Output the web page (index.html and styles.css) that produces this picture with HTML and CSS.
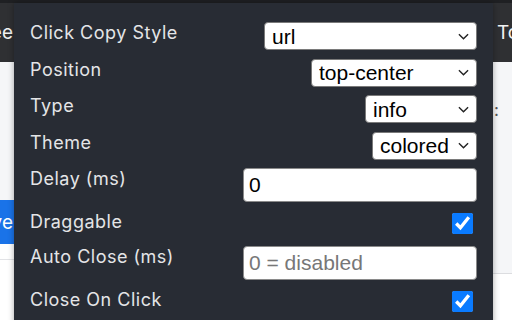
FILE: index.html
```html
<!DOCTYPE html>
<html lang="en">
<head>
    <meta charset="UTF-8">
    <meta name="viewport" content="width=device-width, initial-scale=1.0">
    <title>Toast Settings</title>
    <link rel="stylesheet" href="styles.css">
</head>
<body>
    <div class="page">
        <div class="topbar">
            <div class="cut-left">Free</div>
            <div></div>
            <div class="cut-right">Tools</div>
        </div>
        <div class="content">
            <div class="side side-left">
                <div class="save-btn">Save</div>
                <div class="side-foot"></div>
            </div>
            <div></div>
            <div class="side side-right">
                <div class="side-mark">:</div>
                <div class="side-foot"></div>
            </div>
        </div>
    </div>

    <div class="panel">
        <div class="row">
            <label>Click Copy Style</label>
            <select class="sel-style">
                <option>url</option>
            </select>
        </div>
        <div class="row">
            <label>Position</label>
            <select class="sel-position">
                <option>top-center</option>
            </select>
        </div>
        <div class="row">
            <label>Type</label>
            <select class="sel-type">
                <option>info</option>
            </select>
        </div>
        <div class="row">
            <label>Theme</label>
            <select class="sel-theme">
                <option>colored</option>
            </select>
        </div>
        <div class="row">
            <label>Delay (ms)</label>
            <input type="text" class="num" value="0">
        </div>
        <div class="row">
            <label>Draggable</label>
            <input type="checkbox" class="check" checked>
        </div>
        <div class="row">
            <label>Auto Close (ms)</label>
            <input type="text" class="num" placeholder="0 = disabled">
        </div>
        <div class="row">
            <label>Close On Click</label>
            <input type="checkbox" class="check" checked>
        </div>
    </div>
</body>
</html>
```

FILE: styles.css
```css
*{
    margin: 0;
    padding: 0;
    box-sizing: border-box;
}
body{
    width: 512px;
    height: 320px;
    overflow: hidden;
    font-family: Inter, "Liberation Sans", sans-serif;
    background-color: #fff;
}

/* page behind the popup */
.page{
    height: 320px;
    display: flex;
    flex-direction: column;
}
.topbar{
    height: 62px;
    border-top: 3px solid #1f2023;
    background-color: #2f3033;
    color: #f2f2f2;
    font-size: 19px;
    display: grid;
    grid-template-columns: 14px 1fr 19px;
    align-items: center;
}
.cut-left{
    display: flex;
    justify-content: flex-end;
    overflow: hidden;
    white-space: nowrap;
    padding-right: 1px;
}
.cut-right{
    overflow: hidden;
    white-space: nowrap;
    padding-left: 4px;
}
.content{
    flex: 1;
    display: grid;
    grid-template-columns: 14px 1fr 19px;
}
.side{
    display: flex;
    flex-direction: column;
    background-color: #f5f6f8;
}
.save-btn{
    margin-top: 138px;
    height: 44px;
    background-color: #1a73e8;
    color: #fff;
    font-size: 19px;
    display: flex;
    align-items: center;
    justify-content: flex-end;
    overflow: hidden;
    white-space: nowrap;
    padding-right: 1px;
}
.side-left .side-foot{
    flex: 1;
    background-color: #fff;
    border-top: 15px solid #fff;
    box-shadow: inset 0 1px 0 #e2e3e6;
}
.side-mark{
    height: 211px;
    padding-top: 38px;
    padding-left: 1px;
    color: #555;
    font-size: 17px;
}
.side-right .side-foot{
    flex: 1;
    background-color: #fff;
    border-top: 1px solid #dcdde0;
}

/* popup */
.panel{
    position: absolute;
    left: 14px;
    top: 3px;
    width: 479px;
    height: 330px;
    background-color: #282c34;
    box-shadow: 0 0 6px rgba(0,0,0,.35);
    padding: 19px 16px 0 16px;
    display: flex;
    flex-direction: column;
    gap: 8.5px;
}
.row{
    display: flex;
    justify-content: space-between;
    align-items: flex-start;
}
.row label{
    font-size: 18px;
    letter-spacing: 0.5px;
    color: #e4e5e7;
    line-height: normal;
}
select{
    -webkit-appearance: none;
    appearance: none;
    height: 28px;
    border: 1px solid #7a7a7a;
    border-radius: 4px;
    padding: 0 26px 0 7px;
    font-family: "Liberation Sans", Arial, sans-serif;
    font-size: 21px;
    color: #000;
    background-color: #fff;
    background-image: url("data:image/svg+xml,%3Csvg xmlns='http://www.w3.org/2000/svg' viewBox='0 0 12 7'%3E%3Cpath d='M1 1L6 6L11 1' fill='none' stroke='%23222' stroke-width='1.5'/%3E%3C/svg%3E");
    background-repeat: no-repeat;
    background-size: 11px 7px;
    background-position: right 7px center;
}
.sel-style{
    width: 213px;
}
.sel-position{
    width: 166px;
}
.sel-type{
    width: 112px;
}
.sel-theme{
    width: 105px;
}
.num{
    width: 234px;
    height: 34px;
    border: 1px solid #8a8a8a;
    border-radius: 4px;
    padding: 0 5px;
    font-family: "Liberation Sans", Arial, sans-serif;
    font-size: 21px;
    color: #000;
    background-color: #fff;
    outline: none;
}
.num::placeholder{
    color: #777;
}
.check{
    width: 21px;
    height: 21px;
    margin: 2.5px 4px 3.5px 0;
    accent-color: #0a7bff;
}
```
